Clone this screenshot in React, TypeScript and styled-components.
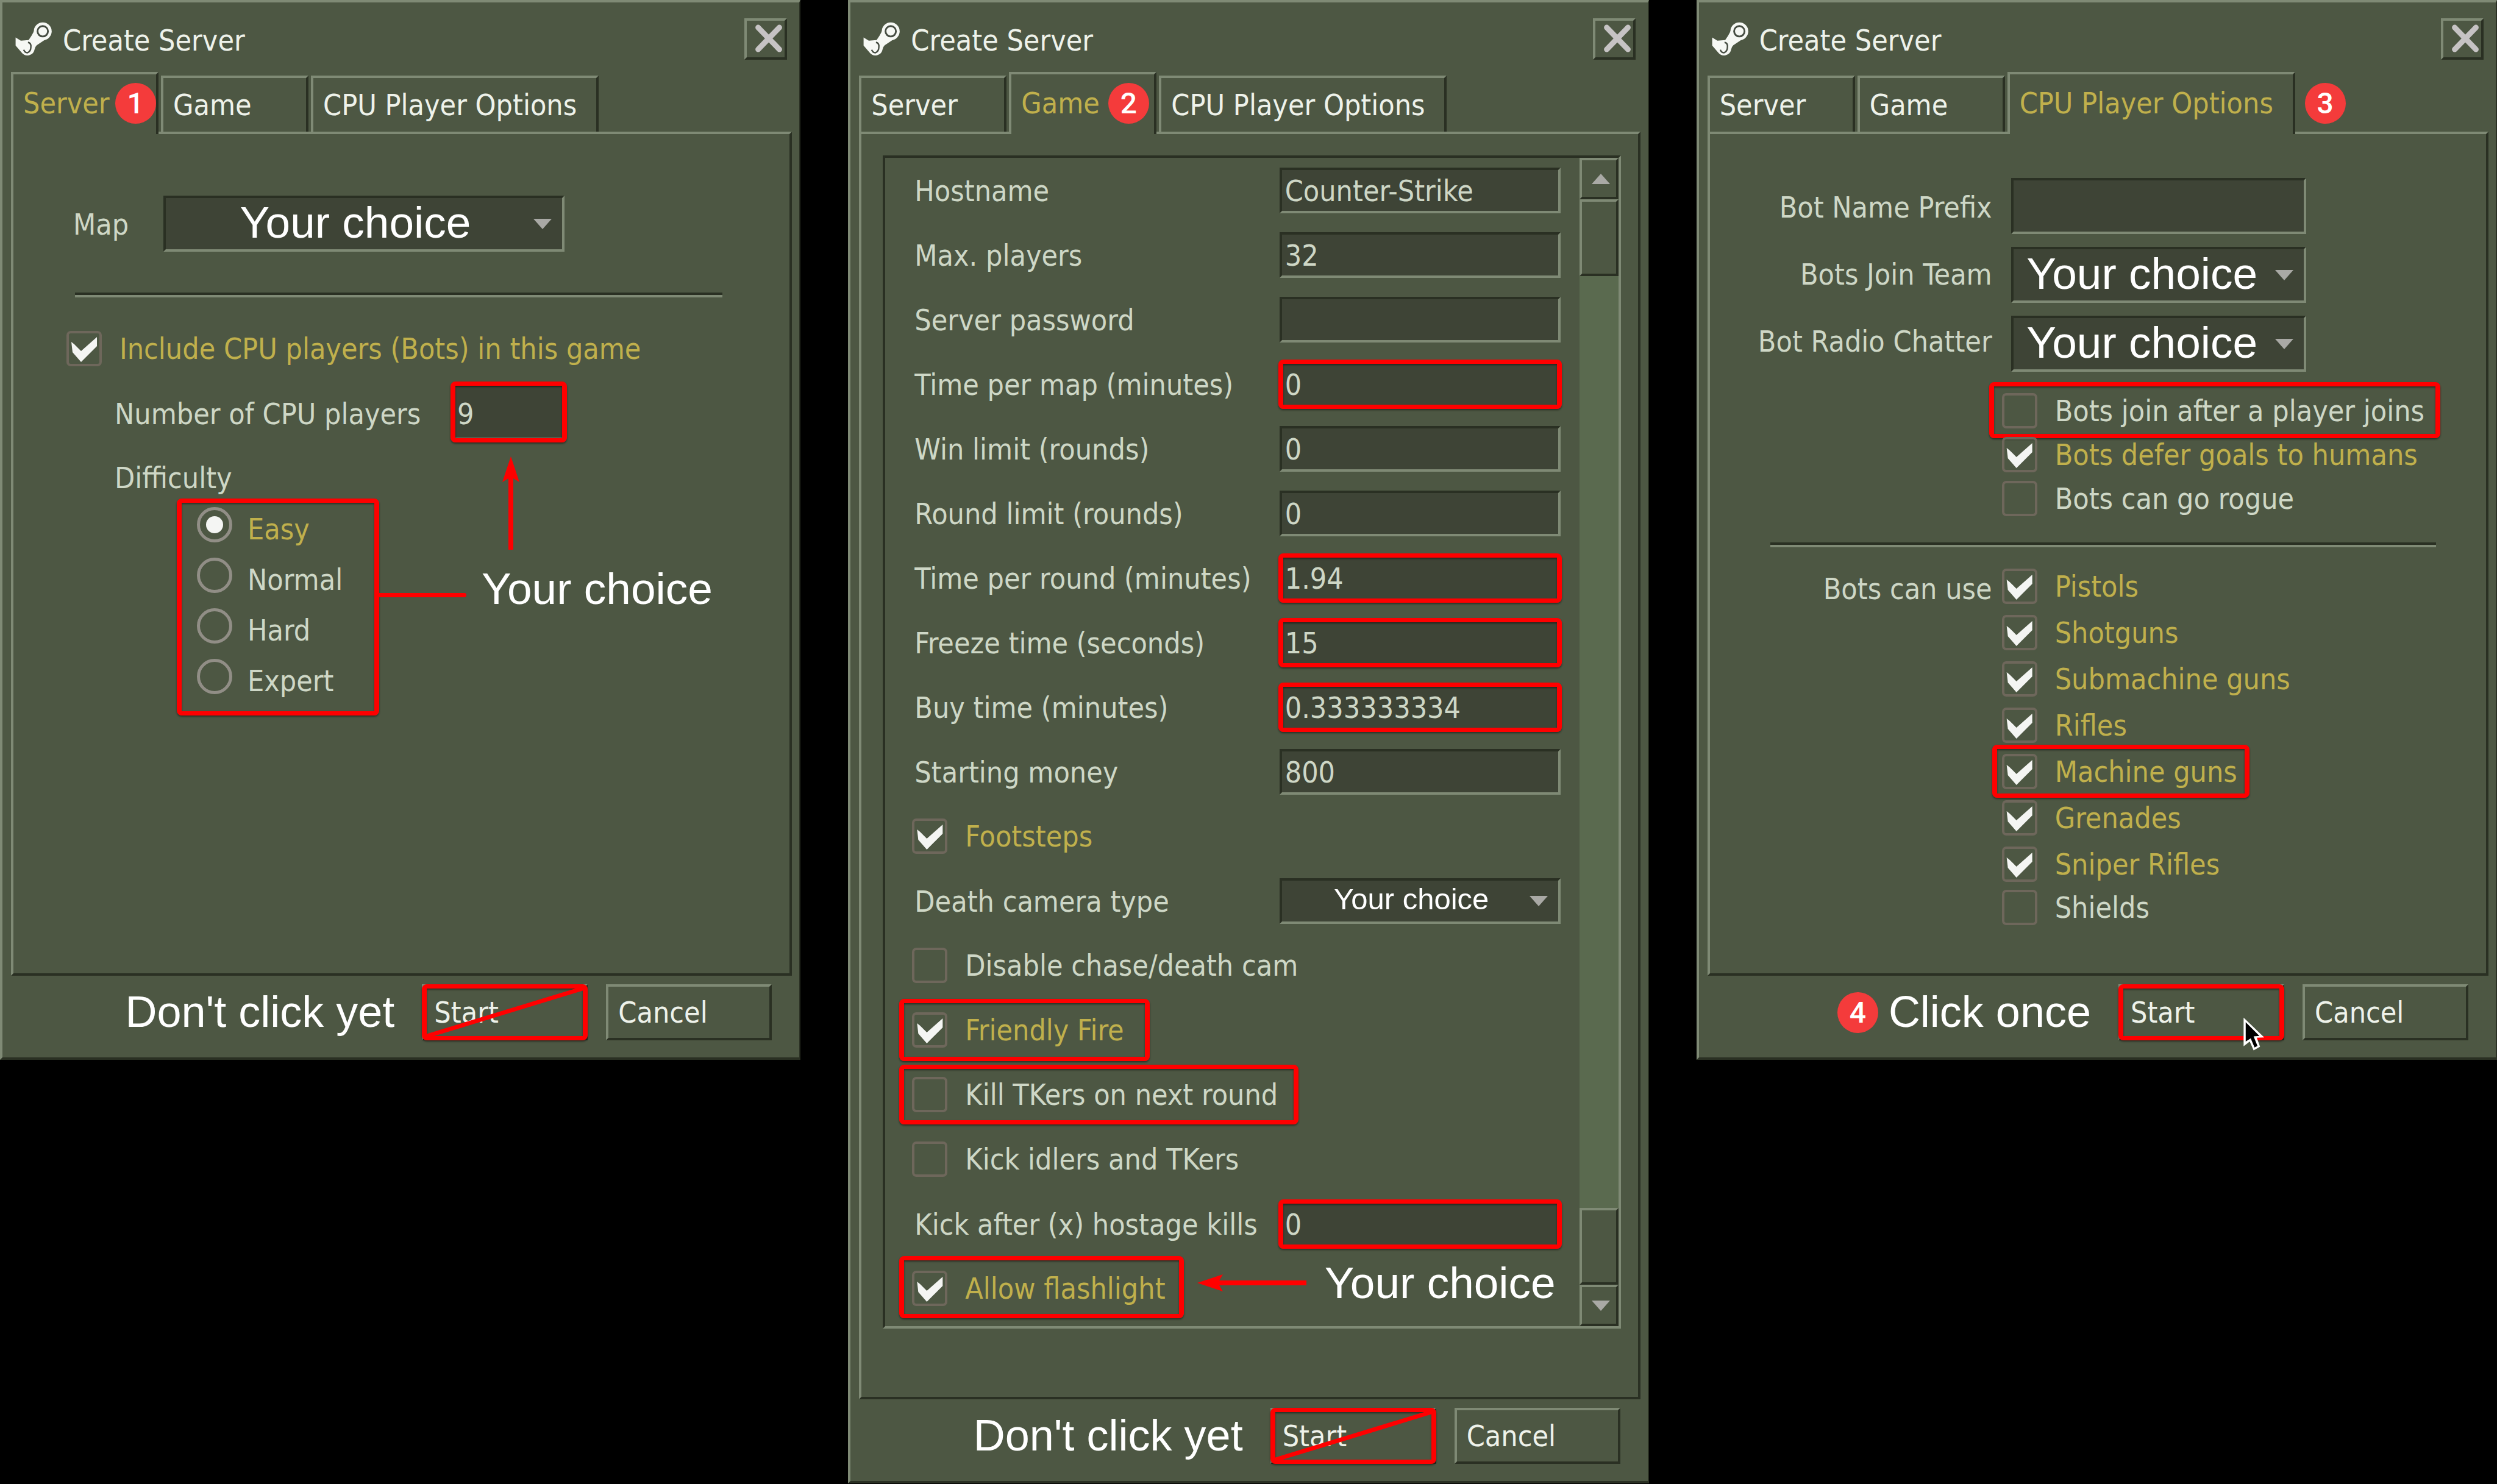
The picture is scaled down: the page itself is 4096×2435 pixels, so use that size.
import React, { ReactNode, useId } from 'react';
import styled, { createGlobalStyle, css } from 'styled-components';

const c = {
  bg: '#4d5743',
  field: '#3e4436',
  light: '#7f8a75',
  dark: '#2a3023',
  track: '#5a6a4f',
  text: '#ced7c6',
  bright: '#eef2ea',
  gold: '#c0b04c',
  red: '#ff0000',
  badge: '#f43b3b',
  box: '#6e675b',
  grey: '#a9a9a5',
};
const uiFont = '"DejaVu Sans Condensed", "DejaVu Sans", sans-serif';
const noteFont = '"Liberation Sans", Arial, sans-serif';

const raised = css`
  border: 4px solid;
  border-color: ${c.light} ${c.dark} ${c.dark} ${c.light};
`;
const sunken = css`
  border: 4px solid;
  border-color: ${c.dark} ${c.light} ${c.light} ${c.dark};
`;

const GlobalStyle = createGlobalStyle`
  *, *::before, *::after { box-sizing: border-box; }
  body { margin: 0; background: #000; }
  button, input, select { font: inherit; color: inherit; margin: 0; border-radius: 0; outline: none; }
`;

const Page = styled.main`
  display: grid;
  grid-template-columns: repeat(3, minmax(0, 1fr));
  gap: 78px;
  align-items: start;
  font: 48px/56px ${uiFont};
  color: ${c.text};
`;

/* ---------- window chrome ---------- */

const Panel = styled.section`
  display: flex;
  flex-direction: column;
  background: ${c.bg};
  border: solid;
  border-width: 4px 2px 4px 4px;
  border-color: ${c.light} ${c.dark} ${c.dark} ${c.light};
`;

const TitleBar = styled.header`
  display: flex;
  align-items: center;
  gap: 15px;
  height: 114px;
  padding: 6px 20px 0 20px;
  color: ${c.bright};
`;

const Title = styled.h1`
  flex: 1;
  margin: 0;
  padding-top: 4px;
  font-size: 48px;
  line-height: 56px;
  font-weight: 400;
`;

const CloseButton = styled.button`
  ${raised}
  width: 70px;
  height: 68px;
  padding: 0;
  background: ${c.bg};
  svg {
    display: block;
    width: 62px;
    height: 60px;
  }
`;

const Tabs = styled.div`
  display: flex;
  align-items: flex-end;
  gap: 4px;
  height: 98px;
  padding: 0 14px;
`;

const Tab = styled.button<{ $active?: boolean; $wide?: boolean }>`
  display: flex;
  align-items: center;
  position: relative;
  width: ${p => (p.$wide ? 472 : 242)}px;
  height: 92px;
  padding: 0 0 0 16px;
  border: solid;
  border-width: 4px 4px 0 4px;
  border-color: ${c.light} ${c.dark} ${c.light} ${c.light};
  background: ${c.bg};
  color: ${c.bright};
  white-space: nowrap;
  ${p =>
    p.$active &&
    css`
      z-index: 1;
      height: 102px;
      margin-bottom: -4px;
      padding-bottom: 4px;
      color: ${c.gold};
    `}
`;

const Badge = styled.span<{ $gap?: number }>`
  flex: none;
  display: grid;
  place-items: center;
  width: 67px;
  height: 67px;
  margin-left: ${p => p.$gap ?? 0}px;
  border-radius: 50%;
  background: ${c.badge};
  color: #fff;
  font: 500 48px/67px Roboto, sans-serif;
`;

const TabBadgeSlot = styled.div`
  align-self: center;
  padding: 4px 0 0 12px;
`;

const Pane = styled.div`
  ${raised}
  min-height: 1385px;
  margin: 0 12px 0 14px;
`;

const Footer = styled.footer`
  display: flex;
  align-items: center;
  justify-content: flex-end;
  padding: 14px 45px 28px 0;
`;

const Note = styled.span`
  color: #fff;
  font: 73px/80px ${noteFont};
  white-space: nowrap;
`;

const FooterNote = styled.div`
  display: flex;
  align-items: center;
  gap: 17px;
  margin-right: 45px;
  ${Note} {
    padding-bottom: 2px;
    font-size: 72px;
  }
`;

const ButtonSlot = styled.div`
  position: relative;
  margin-right: 30px;
`;

const PushButton = styled.button`
  ${raised}
  display: block;
  width: 272px;
  height: 92px;
  padding: 0 0 0 16px;
  background: ${c.bg};
  color: ${c.bright};
  text-align: left;
`;

const Strike = styled.svg`
  position: absolute;
  inset: 0;
  width: 100%;
  height: 100%;
  pointer-events: none;
`;

const Cursor = styled.svg`
  position: absolute;
  left: 204px;
  top: 54px;
  width: 36px;
  height: 55px;
`;

/* ---------- red outlines and callouts ---------- */

const Mark = styled.span<{ $inset?: string }>`
  position: absolute;
  inset: ${p => p.$inset ?? '0'};
  border: 8px solid ${c.red};
  border-width: 7px 8px;
  border-radius: 8px;
  box-shadow: 0 2px 3px rgba(0, 0, 0, 0.45), inset 0 2px 3px rgba(0, 0, 0, 0.45);
  pointer-events: none;
`;

const ArrowUp = styled.svg`
  position: absolute;
  left: 82px;
  top: 119px;
  width: 30px;
  height: 153px;
`;

const SideCallout = styled.div`
  position: absolute;
  left: 100%;
  top: 108px;
  display: flex;
  align-items: center;
  gap: 25px;
  ${Note} {
    padding-bottom: 20px;
  }
`;

const Connector = styled.i`
  width: 143px;
  height: 7px;
  border-radius: 0 4px 4px 0;
  background: ${c.red};
`;

const RowCallout = styled.div`
  display: flex;
  align-items: center;
  gap: 30px;
  padding: 0 8px 18px 0;
  svg {
    width: 179px;
    height: 30px;
  }
`;

/* ---------- controls ---------- */

const FieldBox = styled.div<{ $w: number; $h: number }>`
  position: relative;
  flex: none;
  width: ${p => p.$w}px;
  height: ${p => p.$h}px;
`;

const TextInput = styled.input<{ $low?: boolean }>`
  ${sunken}
  display: block;
  width: 100%;
  height: 100%;
  padding: ${p => (p.$low ? 6 : 2)}px 4px 0 5px;
  background: ${c.field};
`;

const Select = styled.select<{ $small?: boolean; $shift?: number }>`
  ${sunken}
  appearance: none;
  display: block;
  width: 100%;
  height: 100%;
  padding: 0 ${p => p.$shift ?? 28}px ${p => (p.$small ? 6 : 14)}px 0;
  background: ${c.field};
  color: #fff;
  font: ${p => (p.$small ? '49px/56px' : '73px/80px')} ${noteFont};
  text-align: center;
  text-align-last: center;
`;

const Triangle = styled.i`
  position: absolute;
  right: 21px;
  top: 50%;
  margin-top: -8px;
  border: solid transparent;
  border-width: 17px 15px 0 15px;
  border-top-color: ${c.grey};
  pointer-events: none;
`;

const CheckLabel = styled.label<{ $on?: boolean }>`
  position: relative;
  display: flex;
  align-items: center;
  gap: 29px;
  width: fit-content;
  height: 58px;
  color: ${p => (p.$on ? c.gold : c.text)};
  white-space: nowrap;
`;

const CheckInput = styled.input`
  appearance: none;
  flex: none;
  width: 58px;
  height: 58px;
  border: 4px solid ${c.box};
  border-radius: 7px;
  &:checked::before {
    content: '';
    display: block;
    width: 50px;
    height: 50px;
    background: #f4f5f3;
    clip-path: polygon(4px 14px, 9px 18px, 20px 29px, 46px 6px, 46px 21px, 20px 47px, 6px 31px);
  }
`;

const RadioInput = styled.input`
  appearance: none;
  flex: none;
  width: 58px;
  height: 58px;
  border: 5px solid #918e86;
  border-radius: 50%;
  &:checked::before {
    content: '';
    display: block;
    width: 28px;
    height: 28px;
    margin: 10px;
    border-radius: 50%;
    background: #f4f5f3;
  }
`;

const Divider = styled.hr`
  height: 8px;
  margin: 0;
  border: solid;
  border-width: 4px 0;
  border-color: ${c.dark} transparent ${c.light};
`;

/* ---------- Server tab ---------- */

const ServerBody = styled.div`
  padding: 101px 110px 0 87px;
  ${Divider} {
    margin: 67px 0 55px 14px;
  }
`;

const MapRow = styled.div`
  display: flex;
  align-items: center;
  padding-left: 11px;
  label {
    width: 148px;
    padding-top: 2px;
  }
`;

const CountRow = styled.div`
  display: flex;
  align-items: center;
  margin: 29px 0 34px 79px;
  label {
    width: 553px;
    padding-top: 6px;
  }
`;

const DifficultyTitle = styled.div`
  margin-left: 79px;
`;

const RadioList = styled.div`
  position: relative;
  width: 332px;
  margin: 6px 0 0 181px;
  padding: 1px 0 23px 33px;
`;

const RadioLabel = styled.label<{ $on?: boolean }>`
  display: flex;
  align-items: center;
  gap: 25px;
  height: 83px;
  color: ${p => (p.$on ? c.gold : c.text)};
  span {
    padding-top: 14px;
  }
`;

/* ---------- Game tab ---------- */

const GameBody = styled.div`
  padding: 35px 28px 112px 35px;
`;

const Frame = styled.div`
  ${sunken}
  display: flex;
`;

const Settings = styled.div`
  flex: 1;
  padding: 0 31px 9px 44px;
`;

const SettingRow = styled.div`
  display: flex;
  align-items: center;
  justify-content: space-between;
  height: 106px;
  > label:first-child:not(${CheckLabel}) {
    padding: 2px 0 0 4px;
  }
`;

const ScrollBar = styled.div`
  display: flex;
  flex-direction: column;
  width: 64px;
  background: ${c.track};
`;

const ScrollButton = styled.button<{ $down?: boolean }>`
  ${raised}
  display: grid;
  place-items: center;
  height: 68px;
  padding: 0 0 0 6px;
  background: ${c.bg};
  &::before {
    content: '';
    border: solid transparent;
    border-width: ${p => (p.$down ? '17px 15px 0' : '0 15px 17px')};
    border-color: ${p => (p.$down ? `${c.grey} transparent transparent` : `transparent transparent ${c.grey}`)};
  }
`;

const ScrollPiece = styled.div`
  ${raised}
  height: 126px;
  background: ${c.bg};
`;

const ScrollTrack = styled.div`
  flex: 1;
`;

/* ---------- CPU Player Options tab ---------- */

const BotBody = styled.div`
  padding-top: 65px;
  ${Divider} {
    margin: 36px 82px 26px 99px;
  }
`;

const BotGrid = styled.div`
  display: grid;
  grid-template-columns: 463px 484px;
  column-gap: 31px;
`;

const BotLabels = styled.div`
  display: flex;
  flex-direction: column;
  align-items: flex-end;
  label {
    line-height: 110px;
  }
`;

const BotFields = styled.div`
  display: flex;
  flex-direction: column;
  gap: 21px;
  padding-top: 7px;
`;

const BotFlags = styled.div`
  display: flex;
  flex-direction: column;
  align-items: flex-start;
  gap: 14px;
  padding: 30px 0 7px 479px;
`;

const WeaponGrid = styled.div`
  display: grid;
  grid-template-columns: 463px auto;
  column-gap: 16px;
  justify-content: start;
`;

const WeaponTitle = styled.div`
  padding-top: 14px;
  text-align: right;
`;

const WeaponRow = styled.div`
  display: flex;
  align-items: center;
  height: 76px;
  &:last-child {
    height: 66px;
  }
`;

/* ---------- parts ---------- */

const SteamIcon = () => (
  <svg width="64" height="60" viewBox="60 65 240 225" aria-hidden="true">
    <path d="M66 168 L98 188 L146 184 Q164 160 180 128 L262 172 Q226 196 196 216 Q184 228 183 240 A45 45 0 0 1 104 262 L66 218Z" fill="#f6f8f4" />
    <circle cx="233" cy="130" r="55" fill="#f6f8f4" />
    <circle cx="233" cy="130" r="32" fill="none" stroke="#454c41" strokeWidth="11" />
    <path d="M142 198 Q162 202 160 226 Q160 254 138 262 Q122 262 116 244" fill="none" stroke="#454c41" strokeWidth="9" />
  </svg>
);

const Check = ({ label, on, mark }: { label: string; on?: boolean; mark?: string }) => (
  <CheckLabel $on={on}>
    <CheckInput type="checkbox" defaultChecked={on} />
    {label}
    {mark && <Mark $inset={mark} />}
  </CheckLabel>
);

const Choice = ({ id, small, shift }: { id: string; small?: boolean; shift?: number }) => (
  <>
    <Select id={id} $small={small} $shift={shift}>
      <option>Your choice</option>
    </Select>
    <Triangle />
  </>
);

const tabNames = ['Server', 'Game', 'CPU Player Options'];

const Dialog = ({
  active,
  badge,
  badgeGap,
  note,
  start,
  children,
}: {
  active: number;
  badge: string;
  badgeGap?: number;
  note: ReactNode;
  start: ReactNode;
  children: ReactNode;
}) => (
  <Panel>
    <TitleBar>
      <SteamIcon />
      <Title>Create Server</Title>
      <CloseButton aria-label="Close">
        <svg viewBox="14 14 234 227">
          <path d="M84 56 L216 192 M216 56 L84 192" stroke="#c6c3c4" strokeWidth="34" strokeLinecap="round" />
        </svg>
      </CloseButton>
    </TitleBar>
    <Tabs role="tablist">
      {tabNames.map((name, i) => (
        <Tab key={name} role="tab" aria-selected={i === active} $active={i === active} $wide={i === 2}>
          {name}
          {i === active && i < 2 && <Badge $gap={badgeGap}>{badge}</Badge>}
        </Tab>
      ))}
      {active === 2 && (
        <TabBadgeSlot>
          <Badge>{badge}</Badge>
        </TabBadgeSlot>
      )}
    </Tabs>
    <Pane>{children}</Pane>
    <Footer>
      <FooterNote>{note}</FooterNote>
      <ButtonSlot>
        <PushButton>Start</PushButton>
        <Mark />
        {start}
      </ButtonSlot>
      <PushButton>Cancel</PushButton>
    </Footer>
  </Panel>
);

const StrikeLine = () => (
  <Strike viewBox="0 0 272 92">
    <path d="M5 86 L267 6" stroke={c.red} strokeWidth="7" />
  </Strike>
);

const ServerPanel = () => {
  const id = useId();
  return (
    <Dialog active={0} badge="1" badgeGap={9} note={<Note>Don't click yet</Note>} start={<StrikeLine />}>
      <ServerBody>
        <MapRow>
          <label htmlFor={id + 'map'}>Map</label>
          <FieldBox $w={658} $h={92}>
            <Choice id={id + 'map'} />
          </FieldBox>
        </MapRow>
        <Divider />
        <Check label="Include CPU players (Bots) in this game" on />
        <CountRow>
          <label htmlFor={id + 'count'}>Number of CPU players</label>
          <FieldBox $w={187} $h={92}>
            <TextInput id={id + 'count'} defaultValue="9" $low />
            <Mark $inset="-4px -2px" />
            <ArrowUp viewBox="0 0 30 153">
              <path d="M15 0 L29 42 L19 36 V153 H11 V36 L1 42Z" fill={c.red} />
            </ArrowUp>
          </FieldBox>
        </CountRow>
        <DifficultyTitle id={id + 'diff'}>Difficulty</DifficultyTitle>
        <RadioList role="radiogroup" aria-labelledby={id + 'diff'}>
          {['Easy', 'Normal', 'Hard', 'Expert'].map((d, i) => (
            <RadioLabel key={d} $on={i === 0}>
              <RadioInput type="radio" name={id + 'difficulty'} defaultChecked={i === 0} />
              <span>{d}</span>
            </RadioLabel>
          ))}
          <Mark />
          <SideCallout>
            <Connector />
            <Note>Your choice</Note>
          </SideCallout>
        </RadioList>
      </ServerBody>
    </Dialog>
  );
};

type Setting = {
  label: string;
  kind: 'text' | 'check' | 'choice';
  value?: string;
  on?: boolean;
  mark?: string | boolean;
  callout?: boolean;
};

const settings: Setting[] = [
  { label: 'Hostname', kind: 'text', value: 'Counter-Strike' },
  { label: 'Max. players', kind: 'text', value: '32' },
  { label: 'Server password', kind: 'text', value: '' },
  { label: 'Time per map (minutes)', kind: 'text', value: '0', mark: true },
  { label: 'Win limit (rounds)', kind: 'text', value: '0' },
  { label: 'Round limit (rounds)', kind: 'text', value: '0' },
  { label: 'Time per round (minutes)', kind: 'text', value: '1.94', mark: true },
  { label: 'Freeze time (seconds)', kind: 'text', value: '15', mark: true },
  { label: 'Buy time (minutes)', kind: 'text', value: '0.333333334', mark: true },
  { label: 'Starting money', kind: 'text', value: '800' },
  { label: 'Footsteps', kind: 'check', on: true },
  { label: 'Death camera type', kind: 'choice' },
  { label: 'Disable chase/death cam', kind: 'check' },
  { label: 'Friendly Fire', kind: 'check', on: true, mark: '-22px -42px -22px -21px' },
  { label: 'Kill TKers on next round', kind: 'check', mark: '-20px -34px -20px -21px' },
  { label: 'Kick idlers and TKers', kind: 'check' },
  { label: 'Kick after (x) hostage kills', kind: 'text', value: '0', mark: true },
  { label: 'Allow flashlight', kind: 'check', on: true, mark: '-24px -30px -20px -21px', callout: true },
];

const GamePanel = () => {
  const id = useId();
  return (
    <Dialog active={1} badge="2" badgeGap={14} note={<Note>Don't click yet</Note>} start={<StrikeLine />}>
      <GameBody>
        <Frame>
          <Settings>
            {settings.map((s, i) => (
              <SettingRow key={s.label}>
                {s.kind === 'check' ? (
                  <Check label={s.label} on={s.on} mark={s.mark as string | undefined} />
                ) : (
                  <>
                    <label htmlFor={id + i}>{s.label}</label>
                    <FieldBox $w={461} $h={75}>
                      {s.kind === 'choice' ? <Choice id={id + i} small /> : <TextInput id={id + i} defaultValue={s.value} />}
                      {s.mark && <Mark $inset="-3px -2px" />}
                    </FieldBox>
                  </>
                )}
                {s.callout && (
                  <RowCallout>
                    <svg viewBox="0 0 179 30">
                      <path d="M0 15 L42 1 L36 11 H179 V19 H36 L42 29Z" fill={c.red} />
                    </svg>
                    <Note>Your choice</Note>
                  </RowCallout>
                )}
              </SettingRow>
            ))}
          </Settings>
          <ScrollBar>
            <ScrollButton aria-label="Scroll up" />
            <ScrollPiece />
            <ScrollTrack />
            <ScrollPiece />
            <ScrollButton $down aria-label="Scroll down" />
          </ScrollBar>
        </Frame>
      </GameBody>
    </Dialog>
  );
};

const weapons: [string, boolean][] = [
  ['Pistols', true],
  ['Shotguns', true],
  ['Submachine guns', true],
  ['Rifles', true],
  ['Machine guns', true],
  ['Grenades', true],
  ['Sniper Rifles', true],
  ['Shields', false],
];

const BotPanel = () => {
  const id = useId();
  return (
    <Dialog
      active={2}
      badge="3"
      note={
        <>
          <Badge>4</Badge>
          <Note>Click once</Note>
        </>
      }
      start={
        <Cursor viewBox="135 119 136 208">
          <path d="M140 122 L268 245 L222 247 L242 302 L202 325 L178 270 L140 300Z" fill="#fff" />
          <path d="M153 150 L238 235 L202 238 L226 298 L208 307 L184 250 L153 270Z" fill="#000" />
        </Cursor>
      }
    >
      <BotBody>
        <BotGrid>
          <BotLabels>
            <label htmlFor={id + 'prefix'}>Bot Name Prefix</label>
            <label htmlFor={id + 'team'}>Bots Join Team</label>
            <label htmlFor={id + 'radio'}>Bot Radio Chatter</label>
          </BotLabels>
          <BotFields>
            <FieldBox $w={484} $h={92}>
              <TextInput id={id + 'prefix'} />
            </FieldBox>
            <FieldBox $w={484} $h={92}>
              <Choice id={id + 'team'} shift={54} />
            </FieldBox>
            <FieldBox $w={484} $h={92}>
              <Choice id={id + 'radio'} shift={54} />
            </FieldBox>
          </BotFields>
        </BotGrid>
        <BotFlags>
          <Check label="Bots join after a player joins" mark="-18px -26px -16px -21px" />
          <Check label="Bots defer goals to humans" on />
          <Check label="Bots can go rogue" />
        </BotFlags>
        <Divider />
        <WeaponGrid>
          <WeaponTitle>Bots can use</WeaponTitle>
          <div>
            {weapons.map(([name, on]) => (
              <WeaponRow key={name}>
                <Check label={name} on={on} mark={name === 'Machine guns' ? '-15px -20px -14px -16px' : undefined} />
              </WeaponRow>
            ))}
          </div>
        </WeaponGrid>
      </BotBody>
    </Dialog>
  );
};

export default function App() {
  return (
    <Page>
      <GlobalStyle />
      <ServerPanel />
      <GamePanel />
      <BotPanel />
    </Page>
  );
}
